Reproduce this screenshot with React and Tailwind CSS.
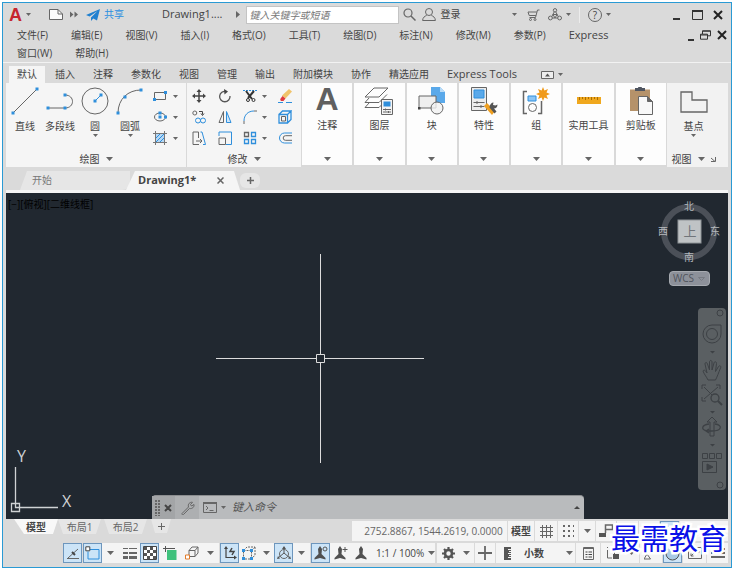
import { useState } from 'react';

const MENUS = [
  '文件(F)', '编辑(E)', '视图(V)', '插入(I)', '格式(O)', '工具(T)', '绘图(D)',
  '标注(N)', '修改(M)', '参数(P)', 'Express', '窗口(W)', '帮助(H)',
];

const RIBBON_TABS = [
  '默认', '插入', '注释', '参数化', '视图', '管理', '输出', '附加模块', '协作', '精选应用', 'Express Tools',
];

const BLUE = '#2f8fdc';
const GRAY = '#666666';

const Svg = ({ w, h, children, className }) => (
  <svg width={w} height={h} viewBox={`0 0 ${w} ${h}`} fill="none" stroke={GRAY} className={`shrink-0 ${className || ''}`} aria-hidden="true">
    {children}
  </svg>
);

const Caret = ({ small }) => (
  <Svg w={small ? 5 : 7} h={small ? 3 : 4}>
    <path d={small ? 'M0 0h5L2.5 3z' : 'M0 0h7L3.5 4z'} fill="#666" stroke="none" />
  </Svg>
);

const IconButton = ({ label, className, children }) => (
  <button type="button" aria-label={label} className={`flex shrink-0 items-center justify-center ${className || ''}`}>
    {children}
  </button>
);

// small square handle used at the ends of the draw icons
const Dot = ({ x, y }) => <rect x={x - 1.5} y={y - 1.5} width="3" height="3" fill={BLUE} stroke="none" />;

/* ---------- title bar ---------- */

const TitleBar = () => (
  <header className="flex h-[23px] items-center pl-1.5 pr-2">
    <button type="button" aria-label="Application menu" className="flex items-center gap-1 font-['Liberation_Sans',sans-serif] text-lg leading-5 font-bold text-[#c6262e]">
      A
      <Caret small />
    </button>
    <IconButton label="New" className="ml-[18px]">
      <Svg w={14} h={11}>
        <path d="M.5.500H9L13.500 5v5.500H.5z" fill="#fafafa" />
        <path d="M9 .5V5h4.500" />
      </Svg>
    </IconButton>
    <IconButton label="More" className="ml-[7px]">
      <Svg w={8} h={7}>
        <path d="M0 .5L3.500 3.500 0 6.500zM4.500 .5L8 3.500 4.500 6.500z" fill="#666" stroke="none" />
      </Svg>
    </IconButton>
    <button type="button" className="ml-2 flex items-center gap-1 text-[#2b8fe0]">
      <Svg w={14} h={12}>
        <path d="M14 0L0 6l3.600 1.600L11.500 2 5 8.500V12l2.300-2.600L11 11.500z" fill="#2080d0" stroke="none" />
      </Svg>
      共享
    </button>
    <span className="ml-[38px] text-[11px]">Drawing1....</span>
    <Svg w={4} h={7} className="ml-3.5">
      <path d="M0 0l4 3.500L0 7z" fill="#666" stroke="none" />
    </Svg>
    <input
      type="text"
      aria-label="键入关键字或短语"
      placeholder="键入关键字或短语"
      className="ml-1.5 h-[18px] w-[153px] border border-[#c4c4c4] bg-white px-0.5 italic outline-none placeholder:text-[#777]"
    />
    <IconButton label="Search" className="ml-1">
      <Svg w={13} h={13}>
        <circle cx="5" cy="5" r="4" strokeWidth="1.200" />
        <path d="M8 8l4.500 4.500" strokeWidth="1.500" />
      </Svg>
    </IconButton>
    <button type="button" className="ml-1.5 flex items-center gap-1">
      <Svg w={14} h={13}>
        <circle cx="7" cy="4" r="3.500" />
        <path d="M.6 12.500c0-3 2.400-4.500 4-5M13.400 12.500c0-3-2.400-4.500-4-5M.6 12.500h12.800" />
      </Svg>
      登录
    </button>
    <div className="ml-auto flex items-center">
      <Caret small />
      <IconButton label="Store" className="ml-2.5">
        <Svg w={13} h={12}>
          <path d="M12.500 1h-2L8.500 8.500h-6M9.800 3H1l1.200 3.500h6.700" />
          <circle cx="3.500" cy="10.500" r="1" />
          <circle cx="8" cy="10.500" r="1" />
        </Svg>
      </IconButton>
      <IconButton label="Autodesk App" className="ml-2 gap-1">
        <Svg w={14} h={13}>
          <path d="M7 2.500L3 10M7 2.500L11 10M3 10h8M5 6.500h4L7 10z" />
          <circle cx="7" cy="2.300" r="1.700" fill="#dadada" />
          <circle cx="2.400" cy="10" r="1.900" fill="#dadada" />
          <circle cx="11.600" cy="10" r="1.900" fill="#dadada" />
        </Svg>
        <Caret small />
      </IconButton>
      <span className="ml-2 h-4 w-px bg-[#ececec]" />
      <IconButton label="Help" className="ml-2 gap-1">
        <span className="flex size-[14px] items-center justify-center rounded-full border border-[#666] leading-3">?</span>
        <Caret small />
      </IconButton>
      <IconButton label="Minimize" className="ml-[61px] h-3 w-2 items-end">
        <span className="mb-px h-0.5 w-[7px] bg-[#333]" />
      </IconButton>
      <IconButton label="Maximize" className="ml-3">
        <Svg w={11} h={10}><path d="M.5 1h10v8.500H.5z" stroke="#333" /><path d="M0 1h11" stroke="#333" strokeWidth="2" /></Svg>
      </IconButton>
      <IconButton label="Close" className="ml-2.5">
        <Svg w={10} h={10}><path d="M1 1l8 8M9 1L1 9" stroke="#222" strokeWidth="2" /></Svg>
      </IconButton>
    </div>
  </header>
);

const MenuBar = () => (
  <div className="flex border-b border-[#f2f2f2] pl-3.5 pr-1">
    <nav className="flex flex-1 flex-wrap gap-x-[23px]">
      {MENUS.map((menu) => (
        <button key={menu} type="button" className={`h-[18px] ${menu === 'Express' ? 'text-[11px]' : ''}`}>
          {menu}
        </button>
      ))}
    </nav>
    <div className="flex h-[18px] w-[76px] items-center justify-end gap-1.5">
      <IconButton label="Minimize drawing" className="h-3 items-end">
        <span className="h-0.5 w-1.5 bg-[#333]" />
      </IconButton>
      <IconButton label="Restore drawing">
        <Svg w={11} h={10}>
          <path d="M2.500 4V.800h8v5H8" stroke="#333" />
          <path d="M.5 4.200h7v5h-7zM.5 5h7M2.500 1.200h8" stroke="#333" />
        </Svg>
      </IconButton>
      <IconButton label="Close drawing">
        <Svg w={10} h={10}><path d="M1 1l8 8M9 1L1 9" stroke="#222" strokeWidth="2" /></Svg>
      </IconButton>
    </div>
  </div>
);

/* ---------- ribbon ---------- */

const DRAW_TOOLS = [
  {
    name: '直线',
    icon: <Svg w={28} h={28}><path d="M2 26L26 2" /><Dot x={2} y={26} /><Dot x={26} y={2} /></Svg>,
  },
  {
    name: '多段线',
    icon: <Svg w={28} h={28}><path d="M2 21h17c10 0 10-13 0-13" /><Dot x={2} y={21} /><Dot x={19} y={21} /><Dot x={19} y={8} /></Svg>,
  },
  {
    name: '圆',
    caret: true,
    icon: <Svg w={28} h={28}><circle cx="14" cy="14" r="13" /><path d="M14 14l6-6" stroke={BLUE} /><Dot x={14} y={14} /><Dot x={20} y={8} /></Svg>,
  },
  {
    name: '圆弧',
    caret: true,
    icon: <Svg w={28} h={28}><path d="M2 26C2 12 12 3 25 3" /><Dot x={2} y={26} /><Dot x={9} y={10} /><Dot x={25} y={3} /></Svg>,
  },
];

const SHAPE_TOOLS = [
  { name: 'Rectangle', icon: <Svg w={14} h={14}><path d="M1.500 3.500h11v7h-11z" /><Dot x={1.500} y={10.500} /><Dot x={12.500} y={3.500} /></Svg> },
  { name: 'Ellipse', icon: <Svg w={14} h={14}><ellipse cx="7" cy="7" rx="5.500" ry="4" /><Dot x={7} y={7} /><Dot x={12.500} y={7} /><Dot x={7} y={3} /></Svg> },
  {
    name: 'Hatch',
    icon: (
      <Svg w={14} h={14}>
        <path d="M3 3h8v8H3z" fill="#b5d8f6" stroke="none" />
        <path d="M3 7l4-4M3 11l8-8M7 11l4-4" stroke={BLUE} />
        <path d="M2.500 0v14M11.500 0v14M0 2.500h14M0 11.500h14" stroke="#777" />
      </Svg>
    ),
  },
];

const MODIFY_TOOLS = [
  {
    name: 'Move',
    icon: <Svg w={14} h={14}><path d="M7 2v10M2 7h10" stroke="#444" strokeWidth="1.500" /><path d="M7 0l2.500 3h-5zM7 14l2.500-3h-5zM0 7l3-2.500v5zM14 7l-3-2.500v5z" fill="#444" stroke="none" /></Svg>,
  },
  {
    name: 'Rotate',
    icon: <Svg w={14} h={14}><path d="M8 2.500A5.200 5.200 0 1 0 12 7" stroke="#555" strokeWidth="1.300" /><path d="M6 0l4 2.500L6.500 5.500z" fill="#444" stroke="none" /></Svg>,
  },
  {
    name: 'Trim',
    caret: true,
    icon: (
      <Svg w={14} h={14}>
        <path d="M0 1.500h14" stroke={BLUE} strokeDasharray="2 1" />
        <path d="M3 2l6 8M11 2L5 9" stroke="#333" strokeWidth="2" />
        <circle cx="5" cy="11" r="1.500" stroke="#333" />
        <circle cx="10.500" cy="11" r="1.500" stroke="#333" />
      </Svg>
    ),
  },
  {
    name: 'Erase',
    icon: (
      <Svg w={14} h={14}>
        <path d="M11 0l3 2.500-6.500 7-3.500-3z" fill="#f0c36a" stroke="none" />
        <path d="M4.500 7l3 2.500-2 2.500H3c-1-1-1-2 0-3z" fill="#e0393e" stroke="none" />
        <path d="M0 13.500h5M8 13.500h6" stroke={BLUE} />
      </Svg>
    ),
  },
  {
    name: 'Copy',
    icon: (
      <Svg w={14} h={14}>
        <circle cx="2.800" cy="3" r="2" />
        <path d="M7 1.500h3.500v3M9 3.500l1.500 2 1.500-2" stroke="#444" />
        <circle cx="6" cy="10.500" r="2.500" stroke={BLUE} />
        <circle cx="11" cy="10.500" r="2.500" stroke={BLUE} />
      </Svg>
    ),
  },
  {
    name: 'Mirror',
    icon: <Svg w={14} h={14}><path d="M5.500 1.500V12.500H1z" /><path d="M8.500 1.500V12.500H13z" stroke={BLUE} fill="#cfe6fa" /></Svg>,
  },
  {
    name: 'Fillet',
    caret: true,
    icon: <Svg w={14} h={14}><path d="M1 14v-3M11 1h3" /><path d="M1 11C1 5 5 1 11 1" stroke={BLUE} /></Svg>,
  },
  {
    name: 'Explode',
    icon: (
      <Svg w={14} h={14}>
        <path d="M1 4.500h8.500V13H1zM1 4.500L4.500 1H13L9.500 4.500M13 1v8.500L9.500 13" stroke={BLUE} strokeWidth="1.300" />
        <path d="M3.500 6.500h4V11h-4z" />
      </Svg>
    ),
  },
  {
    name: 'Stretch',
    icon: <Svg w={14} h={14}><path d="M7 13.500H1V1h5.500v6M4 10h6M8 8l2 2-2 2" /><path d="M8.500 1H10l3.500 12.500H11" stroke={BLUE} /></Svg>,
  },
  {
    name: 'Scale',
    icon: <Svg w={14} h={14}><path d="M1 5V1h12.500v12.500H8" stroke={BLUE} /><path d="M1 7h6.500v6.500H1z" /></Svg>,
  },
  {
    name: 'Array',
    caret: true,
    icon: <Svg w={14} h={14}><path d="M1.500 1.500h4v4h-4z" strokeWidth="1.300" /><path d="M8.500 1.500h4v4h-4zM1.500 8.500h4v4h-4zM8.500 8.500h4v4h-4z" stroke={BLUE} strokeWidth="1.300" /></Svg>,
  },
  {
    name: 'Offset',
    icon: <Svg w={14} h={14}><path d="M14 2H6.500a5 5 0 0 0 0 10H14" stroke={BLUE} /><path d="M14 4.700H7.500a2.300 2.300 0 0 0 0 4.600H14" /></Svg>,
  },
];

const PropsSheet = ({ x, y }) => (
  <g transform={`translate(${x} ${y})`}>
    <path d="M.5.500h11v15H.5z" fill="#f4f4f4" />
    <path d="M2.500 2.500h7v5h-7z" fill={BLUE} stroke="none" />
    <path d="M2 10.500h8M2 13h8M4.500 9.500v2M7.500 12v2" />
  </g>
);

const TILES = [
  {
    name: '注释',
    icon: <span className="mb-1 h-6 font-['Liberation_Sans',sans-serif] text-[32px] leading-6 font-bold text-[#606060]">A</span>,
  },
  {
    name: '图层',
    icon: (
      <Svg w={30} h={28}>
        <path d="M10 1h14l-9 9H1zM5 11l-4 4.500h14M5 16l-4 4.500h14M15 15.500l8-8M15 20.500l3-3" />
        <PropsSheet x={17} y={12} />
      </Svg>
    ),
  },
  {
    name: '块',
    icon: (
      <Svg w={28} h={28}>
        <path d="M13 0h9l5 5v11H13z" fill="#5aa9ea" stroke="none" />
        <path d="M22 0v5h5z" fill="#b9dcf8" stroke="none" />
        <path d="M1 9h17v12H1z" fill="#efefef" />
        <circle cx="19" cy="21" r="6" fill="#f1f1f1" fillOpacity=".8" />
        <rect x="0" y="20" width="2.500" height="2.500" fill="#444" stroke="none" />
      </Svg>
    ),
  },
  {
    name: '特性',
    icon: (
      <Svg w={28} h={28}>
        <path d="M1.500 .5h15v23h-15z" fill="#ececec" />
        <path d="M4 3h10v8H4z" fill="#5aa9ea" stroke={BLUE} />
        <path d="M3.500 15.500h11M3.500 19.500h11M7 14v3M11 18v3" />
        <path d="M14 19l3-3 8 8-3 4z" fill="#f0a020" stroke="none" />
        <path d="M19.500 20.500c0-3 2-5 4-5l-.5 2.500 2.500.5 2-1c0 2.500-1.500 4-3.500 4l2.500 3-2 2z" fill="#555" stroke="none" />
      </Svg>
    ),
  },
  {
    name: '组',
    icon: (
      <Svg w={28} h={28}>
        <path d="M5 4.500H1.500v22H5M16 26.500h3.500V14" strokeWidth="1.500" />
        <path d="M6 9h8v5H6z" fill="#8cc5f5" stroke={BLUE} />
        <circle cx="10.500" cy="20.500" r="4" />
        <path d="M21 0l1.400 3.500L26 2l-1.500 3.600L28 7l-3.500 1.400L26 12l-3.600-1.500L21 14l-1.400-3.500L16 12l1.500-3.600L14 7l3.500-1.400L16 2l3.600 1.500z" fill="#f09a1a" stroke="none" />
      </Svg>
    ),
  },
  {
    name: '实用工具',
    icon: (
      <Svg w={28} h={28}>
        <path d="M2 10h24v7H2z" fill="#f0a81e" stroke="none" />
        <path d="M4.500 10v3M7.500 10v2M10.500 10v3M13.500 10v2M16.500 10v3M19.500 10v2M22.500 10v3" stroke="#a86d05" />
      </Svg>
    ),
  },
  {
    name: '剪贴板',
    icon: (
      <Svg w={28} h={28}>
        <path d="M3 2.500h20V24H3z" fill="#b5926a" stroke="none" />
        <path d="M8 1h3c0-2 4-2 4 0h3v3H8z" fill="#4f5560" stroke="none" />
        <path d="M11.500 9.500h9l5 5v13h-14z" fill="#f8f8f8" />
        <path d="M20.500 9.500v5h5z" fill="#666" />
      </Svg>
    ),
  },
];

const Ribbon = () => {
  const [active, setActive] = useState('默认');

  return (
    <section>
      <div role="tablist" className="flex items-end gap-0.5 px-1.5 pt-[3px]">
        {RIBBON_TABS.map((tab) => (
          <button
            key={tab}
            type="button"
            role="tab"
            aria-selected={tab === active}
            onClick={() => setActive(tab)}
            className={`h-[17px] px-2 ${tab === active ? 'bg-[#f5f5f5]' : ''} ${tab === 'Express Tools' ? 'text-[11px]' : ''}`}
          >
            {tab}
          </button>
        ))}
        <IconButton label="Minimize ribbon" className="ml-3.5 h-[17px] gap-1">
          <Svg w={13} h={8}>
            <path d="M.5.500h12v7H.5z" fill="#eee" />
            <path d="M4 5.500h5L6.500 2.500z" fill="#555" stroke="none" />
          </Svg>
          <Caret small />
        </IconButton>
      </div>

      <div className="mx-[3px] flex h-[84px] bg-[#d9d9d9]">
        {/* 绘图 */}
        <div className="flex w-[181px] flex-col justify-between border-r border-[#d9d9d9] bg-[#f5f5f5] pb-0.5 pt-1">
          <div className="flex justify-between pl-[3px] pr-1">
            {DRAW_TOOLS.map((tool) => (
              <button key={tool.name} type="button" className="flex min-w-8 flex-col items-center">
                {tool.icon}
                <span className="mt-[3px] leading-4">{tool.name}</span>
                {tool.caret && <Caret small />}
              </button>
            ))}
            <div className="flex flex-col gap-[7px] pl-1 pt-0.5">
              {SHAPE_TOOLS.map((tool) => (
                <IconButton key={tool.name} label={tool.name} className="gap-1.5 pr-1">
                  {tool.icon}
                  <Caret small />
                </IconButton>
              ))}
            </div>
          </div>
          <button type="button" className="flex items-center justify-center gap-1.5 leading-3">
            绘图 <Caret />
          </button>
        </div>

        {/* 修改 */}
        <div className="flex w-[114px] flex-col justify-between bg-[#f5f5f5] pb-0.5 pt-1.5">
          <div className="grid grid-cols-[26px_25px_35px_14px] gap-y-[7px] pl-[5px]">
            {MODIFY_TOOLS.map((tool) => (
              <IconButton key={tool.name} label={tool.name} className="justify-start gap-[5px]">
                {tool.icon}
                {tool.caret && <Caret small />}
              </IconButton>
            ))}
          </div>
          <button type="button" className="flex items-center justify-center gap-1.5 leading-3">
            修改 <Caret />
          </button>
        </div>

        <div className="ml-px flex flex-1 gap-0.5 pb-0.5">
          {TILES.map((tile) => (
            <button key={tile.name} type="button" className="flex flex-1 flex-col items-center bg-[#fdfdfd] pb-1 pt-1">
              {tile.icon}
              <span className="mt-0.5 whitespace-nowrap leading-4">{tile.name}</span>
              <span className="mt-auto"><Caret /></span>
            </button>
          ))}
        </div>

        {/* 视图 */}
        <div className="ml-px flex w-[61px] flex-col items-center justify-between bg-[#f2f2f2] pb-0.5 pr-2 pt-1">
          <button type="button" className="flex flex-col items-center">
            <Svg w={28} h={28}><path d="M1 5h11v8h15v12H1z" strokeWidth="1.300" /></Svg>
            <span className="mt-[3px] leading-4">基点</span>
            <Caret small />
          </button>
          <button type="button" className="flex items-center gap-1.5 leading-3">
            视图 <Caret />
            <Svg w={5} h={5}><path d="M0 1l4 3.500M4.500 0v4.500H0" /></Svg>
          </button>
        </div>
      </div>
    </section>
  );
};

/* ---------- drawing tabs ---------- */

const FileTabs = () => (
  <div className="mx-[3px] mt-1 border-b-[3px] border-[#f5f5f5]">
    <div className="flex h-[19px] pl-3.5">
      <button type="button" className="w-[110px] rounded-br-lg bg-[#e6e6e6] pl-3 text-left text-[#777] [clip-path:polygon(7px_0,100%_0,100%_100%,0_100%)]">
        开始
      </button>
      <div className="-ml-1 flex w-[114px] items-center justify-between bg-[#f5f5f5] pl-3 pr-4 text-[11px] font-bold [clip-path:polygon(9px_0,calc(100%-6px)_0,100%_100%,0_100%)]">
        Drawing1*
        <IconButton label="Close tab">
          <Svg w={7} h={7}><path d="M.5.500l6 6M6.500.500l-6 6" strokeWidth="1.500" /></Svg>
        </IconButton>
      </div>
      <IconButton label="New tab" className="mt-0.5 h-[15px] w-5 rounded-md bg-[#e6e6e6]">
        <Svg w={7} h={7}><path d="M3.500 0v7M0 3.500h7" strokeWidth="1.500" /></Svg>
      </IconButton>
    </div>
  </div>
);

/* ---------- canvas ---------- */

const ViewCube = () => (
  <div className="absolute right-1.5 top-1 flex flex-col items-center">
    <svg width="66" height="70" viewBox="0 0 66 70" className="text-[10px]" aria-label="ViewCube">
      <circle cx="33" cy="35" r="25" fill="none" stroke="#4b5058" strokeWidth="6" />
      <rect x="22" y="23" width="23" height="23" fill="#bfc3c5" stroke="#8f9497" />
      <text x="34" y="39" textAnchor="middle" fill="#70757a" fontSize="13">上</text>
      <text x="33" y="13" textAnchor="middle" fill="#b5b9bd">北</text>
      <text x="33" y="64" textAnchor="middle" fill="#b5b9bd">南</text>
      <text x="7" y="38" textAnchor="middle" fill="#b5b9bd">西</text>
      <text x="59" y="38" textAnchor="middle" fill="#b5b9bd">东</text>
    </svg>
    <button type="button" className="mt-1 flex h-[15px] w-[41px] items-center justify-center gap-1 rounded border border-[#a6aab0] bg-[#8d919a] text-[#50545c]">
      WCS
      <Svg w={7} h={4}><path d="M.5.500h6L3.500 3.500z" stroke="#777b83" /></Svg>
    </button>
  </div>
);

const NavBar = () => (
  <div className="absolute right-0.5 top-[115px] flex w-7 justify-center rounded bg-[#5a5f62]">
    <svg width="28" height="182" viewBox="0 0 28 182" fill="none" stroke="#3d4145" aria-label="Navigation bar">
      <circle cx="22" cy="5" r="3" />
      <path d="M14 17h9v9a9 9 0 1 1-9-9z" />
      <circle cx="14" cy="26" r="5.500" />
      <path d="M12 43h5l-2.500 2.500zM12 103h5l-2.500 2.500zM12 136h5l-2.500 2.500z" fill="#3d4145" stroke="none" />
      <path d="M10 72c-2-4-4-6-5-9 1-2 3 0 4 2L7 56c0-2 2-2 2.500 0l2 6V54c0-2 2.500-2 2.500 0v8l2-7c.500-2 2.500-1.500 2.500.500l-1 8 3-5c1-1.500 3-.5 2 1.500-2 5-3 8-5 12z" />
      <path d="M6 79l14 14M20 79L6 91M4 81v-4h4M18 77h4v4M4 89v4h4" />
      <circle cx="17" cy="90" r="4" fill="#5a5f62" strokeWidth="1.300" />
      <path d="M20 93l4 4" strokeWidth="2" />
      <path d="M12 128v-14H9l5-5 5 5h-3v14z" />
      <path d="M11 116c-8 1-8 6-2 7M17 116c8 1 7 7-3 7H9M11 121l-3 2 3 2" strokeWidth="1.300" />
      <path d="M4.500 145.500h5v5h-5zM11.500 145.500h5v5h-5zM18.500 145.500h5v5h-5zM4.500 153.500h14v11h-14z" />
      <path d="M9 156l6 3-6 3z" fill="#3d4145" />
      <circle cx="22" cy="177" r="3" />
    </svg>
  </div>
);

const Drawing = () => (
  <main className="relative mx-[3px] min-h-[325px] flex-1 overflow-hidden bg-[#212830]">
    <p className="px-0.5 pt-1 leading-[14px] text-black">[−][俯视][二维线框]</p>

    <svg width="210" height="210" viewBox="0 0 210 210" fill="none" stroke="#dcdcdc" className="absolute left-[210px] top-[61px]" aria-hidden="true">
      <path d="M104.500 0v100M104.500 109v100M0 104.500h100M109 104.500h99" />
      <path d="M100.500 100.500h8v8h-8z" />
    </svg>

    {/* UCS icon */}
    <svg width="76" height="72" viewBox="0 0 76 72" fill="none" stroke="#cfd2d4" className="absolute bottom-0 left-1">
      <path d="M5.500 20v36M9 60.500h39M1.500 56.500h8v8h-8zM5.500 56v4.500H9" strokeWidth="1.300" />
      <text x="7" y="15" fontSize="16" fill="#cfd2d4" stroke="none">Y</text>
      <text x="52" y="60" fontSize="16" fill="#cfd2d4" stroke="none">X</text>
    </svg>

    <ViewCube />
    <NavBar />

    <div className="absolute bottom-0 left-[146px] right-[144px] flex h-6 items-center rounded-t-sm border-t border-[#8b8d8f] bg-[#b9bbbd] pr-1">
      <div className="flex h-full items-center gap-1 bg-[#a3a5a7] px-[3px]">
        <Svg w={5} h={16}><path d="M1 0v16M4 0v16" strokeDasharray="2 1" strokeWidth="2" /></Svg>
        <IconButton label="Close command line">
          <Svg w={8} h={8}><path d="M1 1l6 6M7 1L1 7" stroke="#444" strokeWidth="2" /></Svg>
        </IconButton>
      </div>
      <div className="flex h-full items-center bg-[#adafb1] pl-1.5 pr-1">
        <IconButton label="Customize">
          <Svg w={14} h={14}>
            <path d="M1 12.500L7.500 6C6.500 3 9 .8 11.500 1.300L9.500 3.500 10.500 5l2.500-1.500c.5 2.500-2 4.700-4.500 3.900L2.500 13.500C1.500 14 .5 13.500 1 12.500z" />
          </Svg>
        </IconButton>
      </div>
      <IconButton label="Recent commands" className="ml-1 gap-1">
        <Svg w={14} h={11}>
          <path d="M.5.500h13v10H.5z" /><path d="M0 1h14" strokeWidth="2" /><path d="M3 4l2 2-2 2M6.500 8.500h4" />
        </Svg>
        <Caret small />
      </IconButton>
      <input
        type="text"
        aria-label="键入命令"
        placeholder="键入命令"
        className="ml-1.5 min-w-0 flex-1 bg-transparent text-[11px] italic outline-none placeholder:text-[#555]"
      />
      <Svg w={6} h={3}><path d="M0 3h6L3 0z" fill="#444" stroke="none" /></Svg>
    </div>
  </main>
);

/* ---------- status bar ---------- */

const ON = 'border border-[#6d96bd] bg-[#cce4f7]';

const Cell = ({ label, on, className, children }) => (
  <IconButton label={label} className={`h-5 ${on ? ON : 'bg-[#f4f4f4]'} ${className}`}>
    {children}
  </IconButton>
);

const CellCaret = () => (
  <Cell label="Options" className="w-[17px]"><Caret /></Cell>
);

const Cube = ({ w }) => (
  <Svg w={w} h={14}><path d="M4 4.500h6v6H4zM4 4.500L7 1h6l-3 3.500M13 1v6l-3 3.500" /><path d="M.5 9h4v4h-4z" stroke="#e07b2a" fill="#fff" /></Svg>
);

const Person = ({ children }) => (
  <Svg w={14} h={14}>
    <path d="M6 0l2 3-.5 5 4 4v1.500L6 12 .5 13.500V12l4-4L4 3z" fill="#505050" stroke="none" />
    {children}
  </Svg>
);

const LayoutTabs = () => (
  <div className="flex h-[15px] items-start pl-2 leading-[14px]">
    <button type="button" className="h-[15px] w-[44px] bg-[#f8f8f8] font-bold [clip-path:polygon(0_0,100%_0,calc(100%-5px)_100%,10px_100%)]">模型</button>
    <button type="button" className="h-[15px] w-[43px] bg-[#e6e6e6] text-[#666] [clip-path:polygon(0_0,100%_0,calc(100%-5px)_100%,5px_100%)]">布局1</button>
    <button type="button" className="ml-[3px] h-[15px] w-[43px] bg-[#e6e6e6] text-[#666] [clip-path:polygon(0_0,100%_0,calc(100%-5px)_100%,5px_100%)]">布局2</button>
    <IconButton label="New layout" className="ml-1 h-[14px] w-5 bg-[#e6e6e6] [clip-path:polygon(0_0,100%_0,calc(100%-4px)_100%,4px_100%)]">
      <Svg w={7} h={7}><path d="M3.500 0v7M0 3.500h7" /></Svg>
    </IconButton>
  </div>
);

const StatusBar = () => (
  <footer className="relative mx-[3px] pb-[3px]">
    <div className="flex justify-between">
      <LayoutTabs />
      <div className="mt-0.5 flex h-5 w-[376px] gap-px">
        <span className="flex flex-1 items-center justify-center whitespace-nowrap bg-[#f4f4f4] pl-2 text-[#666]">2752.8867, 1544.2619, 0.0000</span>
        <button type="button" className="w-[26px] whitespace-nowrap bg-[#f4f4f4] font-bold">模型</button>
        <Cell label="Grid" className="w-[22px]">
          <Svg w={13} h={13}><path d="M2.500 0v13M6.500 0v13M10.500 0v13M0 2.500h13M0 6.500h13M0 10.500h13" /></Svg>
        </Cell>
        <Cell label="Snap" className="w-5">
          <Svg w={12} h={12}><path d="M1 1h11M1 6h11M1 11h11" strokeWidth="2" strokeDasharray="2 3" /></Svg>
        </Cell>
        <Cell label="Snap options" className="w-4"><Caret /></Cell>
        <Cell label="Dynamic input" className="w-5">
          <Svg w={14} h={14}><path d="M6.500 9V1h7v4.500h-7" strokeWidth="1.500" /><path d="M0 9h7v4H0z" fill="#555" stroke="none" /></Svg>
        </Cell>
        <Cell label="Ortho" className="w-[21px]" />
        <Cell label="Polar" className="w-[20px]">
          <Svg w={14} h={14}><path d="M2 0v12h12" /></Svg>
        </Cell>
        <Cell label="Isometric" on className="w-[19px]">
          <Svg w={14} h={14}><path d="M1 11a6 6 0 0 1 12 0M3 3l8 8M11 3l-5 5" /><path d="M6 3l3 3" stroke={BLUE} /></Svg>
        </Cell>
        <Cell label="Object snap" className="w-[48px] pl-2">
          <Svg w={10} h={12}><path d="M1 2l4 4" stroke="#d33" /><path d="M7 1v10" stroke="#5a5" /></Svg>
        </Cell>
      </div>
    </div>

    <div className="ml-[57px] mt-0.5 flex h-[21px] justify-between">
      <div className="flex">
        <Cell label="Infer constraints" on className="w-[19px]">
          <Svg w={14} h={14}><path d="M1 12.500h12M2 12L12 3" /><path d="M6 6l3 3" stroke="#444" strokeWidth="2" /></Svg>
        </Cell>
        <Cell label="Object snap tracking" on className="ml-px w-[19px]">
          <Svg w={15} h={15}><path d="M4 3.500h10V13H3V5.500" stroke={BLUE} /><path d="M.8.800h4v4h-4z" fill="#fff" stroke="#444" /></Svg>
        </Cell>
        <CellCaret />
        <Cell label="Lineweight" className="w-[21px]">
          <Svg w={14} h={12}><path d="M0 1.500h14" /><path d="M0 6h14" strokeWidth="2" /><path d="M0 10.500h14" strokeWidth="3" /><path d="M5.500 0v12" stroke="#f4f4f4" /></Svg>
        </Cell>
        <Cell label="Transparency" on className="w-[19px]">
          <Svg w={14} h={14}>
            <path d="M.5.500h13v13H.5z" fill="#fff" stroke="#444" />
            <path d="M1 2.500h12M1 8.500h12" strokeWidth="3" strokeDasharray="3 3" stroke="#555" />
            <path d="M4 5.500h9M4 11.500h9" strokeWidth="3" strokeDasharray="3 3" stroke="#555" />
          </Svg>
        </Cell>
        <Cell label="Selection cycling" className="w-[22px]">
          <Svg w={14} h={14}><path d="M4 4h9.500v10H4z" fill="#3fc17c" stroke="none" /><path d="M2.500 0v6M0 2.500h12" stroke="#555" /></Svg>
        </Cell>
        <Cell label="3D object snap" className="w-[21px]"><Cube w={14} /></Cell>
        <CellCaret />
        <Cell label="Dynamic UCS" on className="ml-px w-[19px]">
          <Svg w={14} h={14}>
            <path d="M3 2v9.500h9" stroke="#444" strokeWidth="1.200" />
            <path d="M3 0l2 3H1zM14 11.500l-3-2v4z" fill="#444" stroke="none" />
            <path d="M9 2L7 5.500h4L9 9" stroke="#444" strokeWidth="1.500" />
          </Svg>
        </Cell>
        <Cell label="Selection filtering" className="w-[20px]">
          <Svg w={14} h={14}>
            <path d="M1.500 4.500h8V13h-8zM1.500 4.500L5 1h8L9.500 4.500M13 1v8L9.500 13" strokeDasharray="2 1" />
            <Dot x={1.500} y={4.500} /><Dot x={9.500} y={4.500} /><Dot x={1.500} y={12.500} /><Dot x={9.500} y={12.500} />
          </Svg>
        </Cell>
        <Cell label="Filter options" className="w-[15px]"><Caret /></Cell>
        <Cell label="Gizmo" on className="w-[19px]">
          <Svg w={14} h={14}><path d="M7 1v6L1 12M7 7l6 5" stroke="#555" /><circle cx="7" cy="8" r="4.500" /><path d="M7 0l2 3H5zM0 13l3-.5-2-2.500zM14 13l-3-.5 2-2.500z" fill="#555" stroke="none" /></Svg>
        </Cell>
        <CellCaret />
        <Cell label="Annotation visibility" on className="ml-px w-[19px]">
          <Person><circle cx="11" cy="3" r="2" stroke="#555" /></Person>
        </Cell>
        <Cell label="Auto scale" className="w-[22px]">
          <Person><path d="M11 1v5M8.500 3.500h5" stroke="#555" /></Person>
        </Cell>
        <Cell label="Annotation scale" className="w-[20px]"><Person /></Cell>
        <button type="button" className="flex h-5 items-center gap-1 whitespace-nowrap bg-[#f4f4f4] pl-1">
          1:1 / 100% <Caret />
        </button>
      </div>

      <div className="flex w-[291px] gap-px">
        <Cell label="Workspace" className="w-[37px] gap-2">
          <Svg w={13} h={13}>
            <circle cx="6.500" cy="6.500" r="3.500" stroke="#555" strokeWidth="2.600" />
            <path d="M6.500 0v3M6.500 10v3M0 6.500h3M10 6.500h3M2 2l2 2M9 9l2 2M11 2L9 4M4 9l-2 2" stroke="#555" strokeWidth="2.200" />
          </Svg>
          <Caret />
        </Cell>
        <Cell label="Annotation monitor" className="w-5">
          <Svg w={14} h={14}><path d="M7 0v14M0 7h14" strokeWidth="1.800" /></Svg>
        </Cell>
        <button type="button" className="flex h-5 flex-1 items-center bg-[#f4f4f4] pl-2 pr-0.5 font-bold">
          <Svg w={8} h={13} className="mr-3">
            <path d="M0 0h7v13H0z" fill="#555" stroke="none" />
            <path d="M4 2.500h4M5 4.500h3M4 6.500h4M5 8.500h3M4 10.500h4" stroke="#f4f4f4" />
          </Svg>
          小数
          <span className="ml-auto"><Caret /></span>
        </button>
        <Cell label="Quick properties" className="w-6">
          <Svg w={11} h={13}><path d="M.5.500h10v12H.5z" /><path d="M.5 1.500h10" /><path d="M2.500 5h2M5.500 5H9M2.500 7.500h2M5.500 7.500H9M2.500 10h2M5.500 10H9" stroke="#444" /></Svg>
        </Cell>
        <Cell label="Lock UI" className="w-[38px] gap-2">
          <Svg w={14} h={14}><path d="M1.500 4v8H6M1.500 1v1M4 1.500h9M12.500 2v3" /><path d="M7 8h6v5H7z" fill="#555" stroke="none" /><path d="M8.500 8V6c0-2 3-2 3 0" /></Svg>
          <Caret />
        </Cell>
        <Cell label="Isolate objects" className="w-[22px]">
          <Svg w={14} h={14}><path d="M3 8l3.500 5H0zM5 1l3 4" /><circle cx="10.500" cy="4" r="3" /></Svg>
        </Cell>
        <Cell label="Graphics performance" on className="w-[19px]">
          <Svg w={15} h={15}><circle cx="7.500" cy="7.500" r="6.500" stroke="#555" fill="#a9c9e4" /><path d="M7.500 7.500L12 3" stroke="#333" strokeWidth="1.500" /></Svg>
        </Cell>
        <Cell label="Clean screen" className="w-[23px]">
          <Svg w={14} h={12}><path d="M.5.500h13v11H.5zM3 9l3-3M3 6.500V9h2.500M11 3L8 6M8.500 3H11v2.500" /></Svg>
        </Cell>
        <Cell label="Customization" className="w-[21px]">
          <Svg w={14} h={10}><path d="M0 1h14M0 5h14M0 9h14" strokeWidth="1.800" /></Svg>
        </Cell>
      </div>
    </div>

    <span className="pointer-events-none absolute right-px top-1 whitespace-nowrap text-[29px] leading-8 text-[#0a10e8] [-webkit-text-stroke:5px_white] [paint-order:stroke_fill]">
      最需教育
    </span>
  </footer>
);

const App = () => (
  <div className="flex min-h-screen bg-white p-0.5 font-['Open_Sans','Noto_Sans_CJK_SC',sans-serif] text-[10px] text-[#444]">
    <div className="flex min-w-0 flex-1 flex-col border border-[#2a9ad4] bg-[#dadada]">
      <TitleBar />
      <MenuBar />
      <Ribbon />
      <FileTabs />
      <Drawing />
      <StatusBar />
    </div>
  </div>
);

export default App;
